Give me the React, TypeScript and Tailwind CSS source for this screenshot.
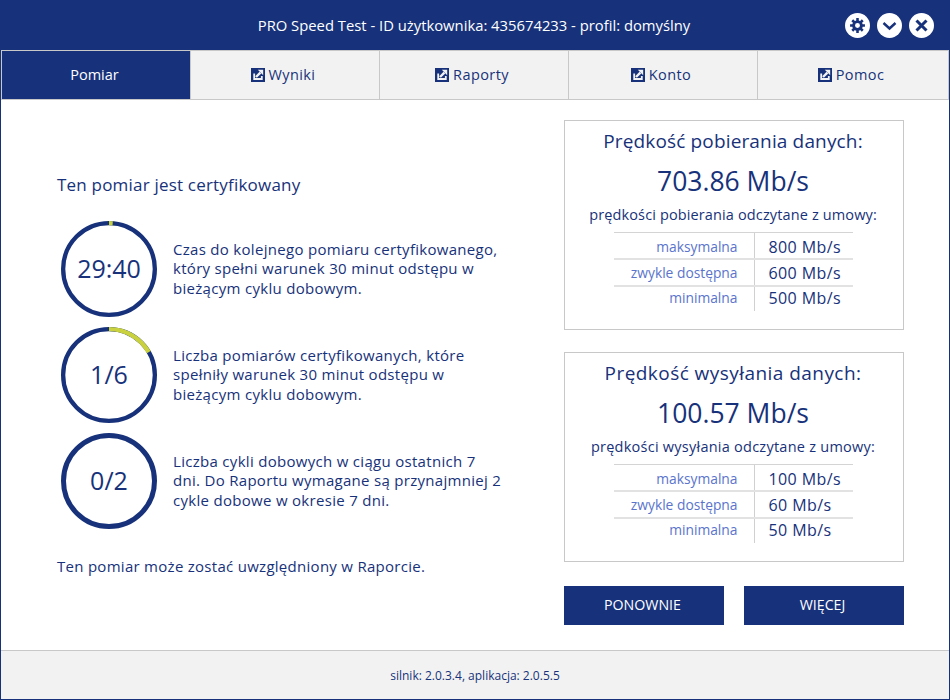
const navy = '#17327a';

function TabIcon() {
  return (
    <svg width="14" height="14" viewBox="0 0 14 14" className="shrink-0">
      <rect width="14" height="14" fill="#17327a" />
      <path d="M3.2 5.5v5.5h7.6V8" fill="none" stroke="#f2f2f2" strokeWidth="1.8" />
      <path d="M5 9l4.4-4.4" stroke="#f2f2f2" strokeWidth="2.4" />
      <path d="M6.8 1.8h5.4v5.4z" fill="#f2f2f2" />
    </svg>
  );
}

function Tab({ label, active, last }: { label: string; active?: boolean; last?: boolean }) {
  if (active) {
    return (
      <div className="w-[189px] flex items-center justify-center pr-[3px] bg-[#17327a] text-white border-r border-[#c8c8c8]">
        {label}
      </div>
    );
  }
  return (
    <div className={`flex items-center justify-center gap-[4px] pr-[4px] bg-[#f2f2f2] text-[#17327a] tracking-[0.4px] ${last ? 'flex-1' : 'w-[189px] border-r border-[#c8c8c8]'}`}>
      <TabIcon />
      <span>{label}</span>
    </div>
  );
}

function Ring({ text, fraction, thick }: { text: string; fraction: number; thick?: boolean }) {
  const sw = thick ? 5 : 4.3;
  const r = 48 - sw / 2;
  const c = 2 * Math.PI * r;
  return (
    <div className="relative w-[96px] h-[96px] shrink-0">
      <svg width="96" height="96" viewBox="0 0 96 96" className="-rotate-90">
        <circle cx="48" cy="48" r={r} fill="none" stroke={navy} strokeWidth={sw} />
        {fraction > 0 && (
          <circle
            cx="48"
            cy="48"
            r={r}
            fill="none"
            stroke="#c9d13f"
            strokeWidth={sw}
            strokeDasharray={`${c * fraction} ${c}`}
          />
        )}
      </svg>
      <div className="absolute inset-0 flex items-center justify-center text-[25px] text-[#17327a]">{text}</div>
    </div>
  );
}

function Stat({ text, value, fraction, thick }: { text: string[]; value: string; fraction: number; thick?: boolean }) {
  return (
    <div className="flex items-center h-[96px] pl-[4px]">
      <Ring text={value} fraction={fraction} thick={thick} />
      <div className="ml-[16px] text-[15px] leading-[19.5px] tracking-[0.3px] text-[#17327a] whitespace-nowrap">
        {text.map((l) => (
          <div key={l}>{l}</div>
        ))}
      </div>
    </div>
  );
}

const rowHeights = ['h-[27px] border-b-2 border-[#e2e2e2]', 'h-[27px] border-b-2 border-[#e2e2e2]', 'h-[24px]'];
const labelOffsets = ['pt-[4px]', 'pt-[2px]', 'pb-[1px]'];
const valueOffsets = ['pt-[2px]', '', 'pb-[2px]'];

function SpeedPanel({ title, speed, sub, rows, titleTrack, subTrack }: { title: string; speed: string; sub: string; rows: string[][]; titleTrack: string; subTrack: string }) {
  return (
    <div className="h-[210px] border border-[#c8c8c8] flex flex-col items-center pr-[2px] text-[#17327a]">
      <div className={`mt-[7px] text-[19px] leading-[26px] ${titleTrack}`}>{title}</div>
      <div className="mt-[9px] text-[26.5px] leading-[36px]">{speed}</div>
      <div className={`mt-[6px] text-[14.5px] leading-[20px] ${subTrack}`}>{sub}</div>
      <div className="mt-[7px] w-[239px] border-t border-[#d4d4d4]">
        {rows.map((row, i) => (
          <div key={row[0]} className={`flex items-center ${rowHeights[i]}`}>
            <div className={`w-[141px] h-full flex items-center justify-end pr-[16px] text-[13.8px] text-[#5a74cc] border-r border-[#d0d0d0] ${labelOffsets[i]}`}>
              {row[0]}
            </div>
            <div className={`pl-[14px] text-[16px] tracking-[0.4px] ${valueOffsets[i]}`}>{row[1]}</div>
          </div>
        ))}
      </div>
    </div>
  );
}

export default function App() {
  return (
    <div className="w-[950px] h-[700px] flex flex-col bg-white border-x border-b border-[#17327a] font-['Open_Sans',sans-serif] overflow-hidden">
      <header className="h-[50px] shrink-0 flex items-center justify-center relative pr-[2px] bg-[#17327a] text-white text-[14.8px]">
        <span>PRO Speed Test - ID użytkownika: 435674233 - profil: domyślny</span>
        <div className="absolute right-[15px] top-[13px] flex gap-[7px]">
          <div className="w-[25px] h-[25px] rounded-full bg-white flex items-center justify-center">
            <svg width="17" height="17" viewBox="0 0 24 24" fill="none" stroke="#17327a">
              <circle cx="12" cy="12" r="5.5" strokeWidth="4" />
              <path d="M12 1.5v5M12 17.5v5M1.5 12h5M17.5 12h5M4.6 4.6l3.5 3.5M15.9 15.9l3.5 3.5M4.6 19.4l3.5-3.5M15.9 8.1l3.5-3.5" strokeWidth="3.6" />
            </svg>
          </div>
          <div className="w-[25px] h-[25px] rounded-full bg-white flex items-center justify-center">
            <svg width="15" height="15" viewBox="0 0 15 15" fill="none" stroke="#17327a" strokeWidth="2.4">
              <path d="M1.5 5l6 5.5 6-5.5" />
            </svg>
          </div>
          <div className="w-[25px] h-[25px] rounded-full bg-white flex items-center justify-center">
            <svg width="15" height="15" viewBox="0 0 15 15" fill="none" stroke="#17327a" strokeWidth="3">
              <path d="M2.5 2.5l10 10M12.5 2.5l-10 10" />
            </svg>
          </div>
        </div>
      </header>

      <nav className="h-[50px] shrink-0 flex border border-[#c8c8c8] text-[14.5px]">
        <Tab label="Pomiar" active />
        <Tab label="Wyniki" />
        <Tab label="Raporty" />
        <Tab label="Konto" />
        <Tab label="Pomoc" last />
      </nav>

      <main className="flex-1 flex pl-[56px] pr-[45px]">
        <section className="w-[507px] flex flex-col text-[#17327a]">
          <div className="mt-[73px] text-[17px] leading-[24px] tracking-[0.2px]">Ten pomiar jest certyfikowany</div>
          <div className="mt-[24px] flex flex-col gap-[10px]">
            <Stat
              value="29:40"
              fraction={0.013}
              text={['Czas do kolejnego pomiaru certyfikowanego,', 'który spełni warunek 30 minut odstępu w', 'bieżącym cyklu dobowym.']}
            />
            <Stat
              value="1/6"
              fraction={0.1667}
              text={['Liczba pomiarów certyfikowanych, które', 'spełniły warunek 30 minut odstępu w', 'bieżącym cyklu dobowym.']}
            />
            <Stat
              value="0/2"
              fraction={0}
              thick
              text={['Liczba cykli dobowych w ciągu ostatnich 7', 'dni. Do Raportu wymagane są przynajmniej 2', 'cykle dobowe w okresie 7 dni.']}
            />
          </div>
          <div className="mt-[26px] text-[15px] leading-[22px] tracking-[0.28px]">Ten pomiar może zostać uwzględniony w Raporcie.</div>
        </section>

        <section className="w-[340px] pt-[20px] flex flex-col">
          <SpeedPanel
            title="Prędkość pobierania danych:"
            speed="703.86 Mb/s"
            sub="prędkości pobierania odczytane z umowy:"
            titleTrack="tracking-[0.15px]"
            subTrack="tracking-[0.13px]"
            rows={[['maksymalna', '800 Mb/s'], ['zwykle dostępna', '600 Mb/s'], ['minimalna', '500 Mb/s']]}
          />
          <div className="h-[22px]" />
          <SpeedPanel
            title="Prędkość wysyłania danych:"
            speed="100.57 Mb/s"
            sub="prędkości wysyłania odczytane z umowy:"
            titleTrack="tracking-[0.45px]"
            subTrack="tracking-[0.25px]"
            rows={[['maksymalna', '100 Mb/s'], ['zwykle dostępna', '60 Mb/s'], ['minimalna', '50 Mb/s']]}
          />
          <div className="mt-[24px] flex gap-[20px]">
            <button className="w-[160px] h-[39px] pr-[3px] pb-[2px] bg-[#17327a] text-white text-[14.2px]">PONOWNIE</button>
            <button className="w-[160px] h-[39px] pr-[3px] pb-[2px] bg-[#17327a] text-white text-[14.2px]">WIĘCEJ</button>
          </div>
        </section>
      </main>

      <footer className="h-[49px] shrink-0 flex items-center justify-center pt-[2px] bg-[#f2f2f2] border-t border-[#c8c8c8] text-[12px] text-[#17327a]">
        silnik: 2.0.3.4, aplikacja: 2.0.5.5
      </footer>
    </div>
  );
}
